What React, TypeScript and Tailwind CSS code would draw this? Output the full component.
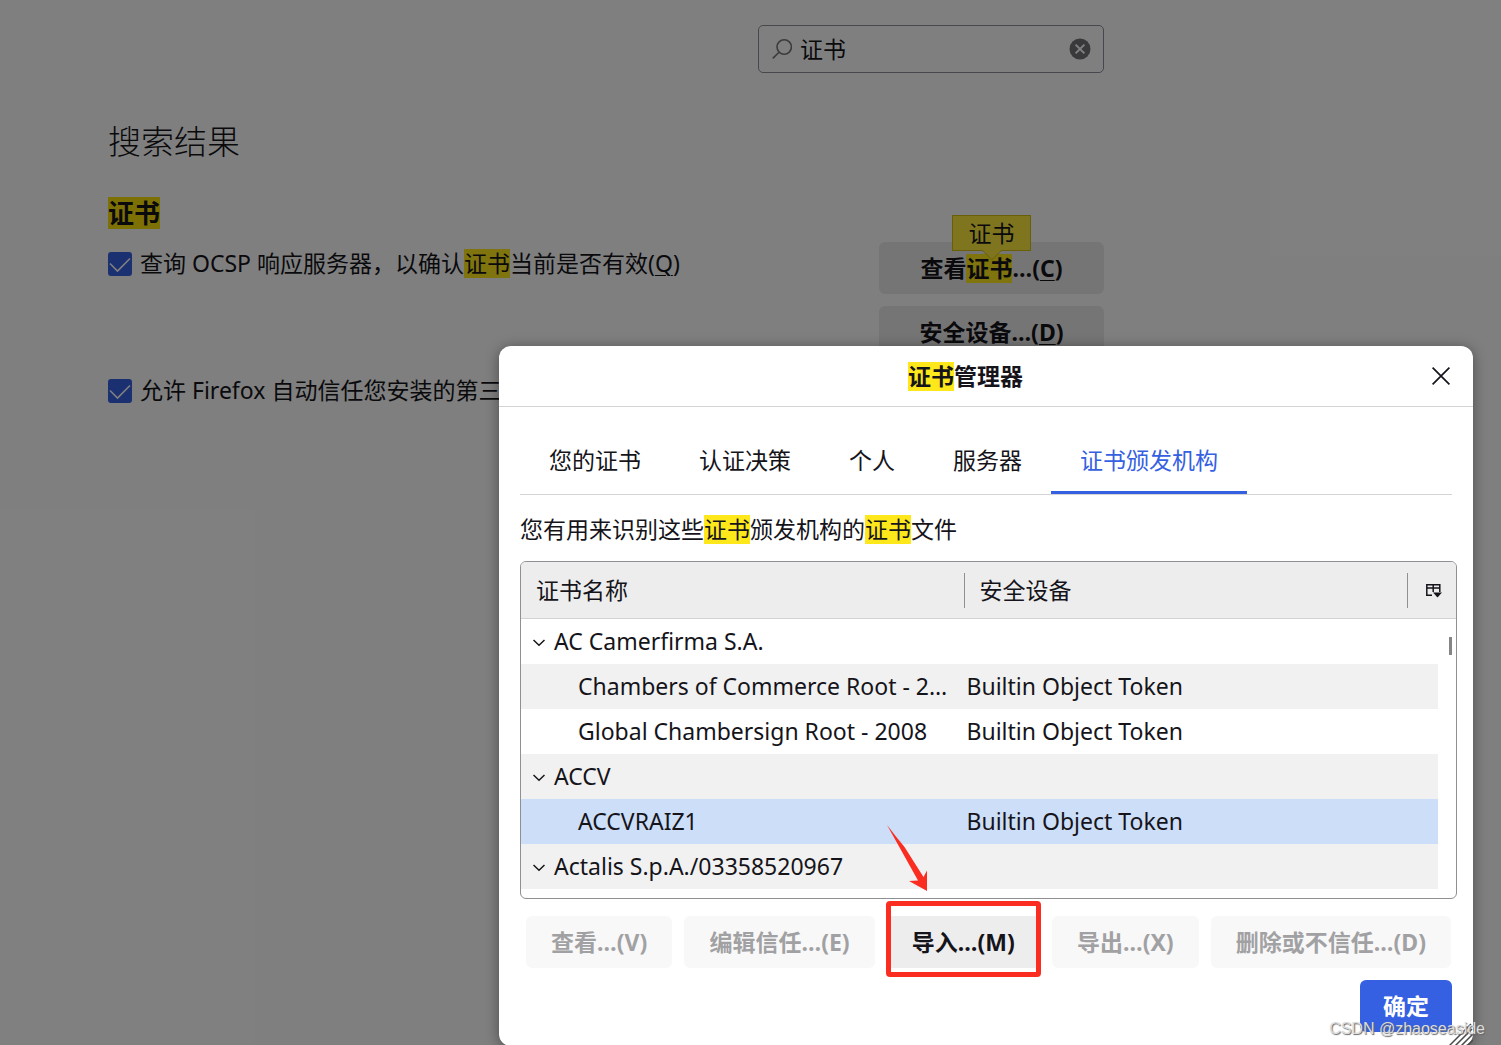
import React from "react";

type Row = {
  name: string;
  device?: string;
  selected?: boolean;
};

const rows: Row[] = [
  { name: "AC Camerfirma S.A." },
  { name: "Chambers of Commerce Root - 2…", device: "Builtin Object Token" },
  { name: "Global Chambersign Root - 2008", device: "Builtin Object Token" },
  { name: "ACCV" },
  { name: "ACCVRAIZ1", device: "Builtin Object Token", selected: true },
  { name: "Actalis S.p.A./03358520967" },
];

const tabs = ["您的证书", "认证决策", "个人", "服务器", "证书颁发机构"];

const Hit: React.FC = () => (
  <mark className="inline-block bg-[#fee81c] leading-[29px] text-inherit">证书</mark>
);

const CheckOption: React.FC<{ id: string; children: React.ReactNode }> = ({ id, children }) => (
  <div className="flex h-[29px] items-center gap-2">
    <span className="relative flex size-6 shrink-0">
      <input id={id} type="checkbox" defaultChecked className="size-6 appearance-none rounded-[3px] bg-[#3560e2]" />
      <svg className="pointer-events-none absolute inset-0" viewBox="0 0 24 24" fill="none" stroke="#fff" strokeWidth="1.6">
        <path d="M2 11.5l7.5 7.5L22 6.5" />
      </svg>
    </span>
    <label htmlFor={id} className="whitespace-nowrap leading-[29px]">
      {children}
    </label>
  </div>
);

const Key: React.FC<{ children: string }> = ({ children }) => (
  <span className="underline decoration-1 underline-offset-3">{children}</span>
);

const Settings: React.FC = () => (
  <main className="max-w-[1104px] pt-[25px] pl-[108px]">
    <div className="ml-auto flex h-12 w-[346px] items-center rounded-[5px] border border-[#8f8f9d] pr-3 pl-[13px]">
      <svg className="size-5 shrink-0" viewBox="0 0 20 20" fill="none" stroke="#77777f" strokeWidth="1.6">
        <circle cx="12.2" cy="8" r="7.2" />
        <path d="M7 13.2L.8 19.4" />
      </svg>
      <input
        type="text"
        aria-label="证书"
        defaultValue="证书"
        className="ml-2 min-w-0 flex-1 bg-transparent outline-none"
      />
      <button aria-label="×" className="shrink-0">
        <svg className="size-[22px]" viewBox="0 0 22 22">
          <circle cx="11" cy="11" r="10.5" fill="#737378" />
          <path d="M6.6 6.6l8.8 8.8M15.4 6.6l-8.8 8.8" stroke="#fff" strokeWidth="2" />
        </svg>
      </button>
    </div>

    <h1 className="mt-[45px] text-[33px] leading-[48px] font-light">搜索结果</h1>
    <h2 className="mt-[31px] flex text-[26px] font-bold">
      <mark className="bg-[#fae20a] leading-8 text-inherit">证书</mark>
    </h2>

    <div className="mt-[13px] flex items-start justify-between">
      <div className="flex flex-col gap-[98px] pt-[7px]">
        <CheckOption id="ocsp">
          查询 OCSP 响应服务器，以确认
          <Hit />
          当前是否有效(<Key>Q</Key>)
        </CheckOption>
        <CheckOption id="roots">允许 Firefox 自动信任您安装的第三方</CheckOption>
      </div>
      <div className="flex w-[225px] shrink-0 flex-col gap-3 font-bold">
        <button className="relative h-[52px] rounded-md bg-[#ebebed]">
          查看
          <Hit />
          …(<Key>C</Key>)
          <span className="absolute -top-[27px] left-[73px] flex h-9 w-[79px] items-center justify-center border border-[#d3bf10] bg-[#ffeb3e] font-normal">
            证书
            <svg className="absolute top-[34px] left-[29px] h-2.5 w-5" viewBox="0 0 20 10">
              <path d="M0 0h20L10 10z" fill="#ffeb3e" />
              <path d="M0 0L10 9.6L20 0" fill="none" stroke="#d3bf10" />
            </svg>
          </span>
        </button>
        <button className="h-[52px] rounded-md bg-[#ebebed]">
          安全设备…(<Key>D</Key>)
        </button>
      </div>
    </div>
  </main>
);

const TreeRow: React.FC<{ row: Row; striped: boolean }> = ({ row, striped }) => (
  <tr className={row.selected ? "h-[45px] bg-[#cddef8]" : striped ? "h-[45px] bg-[#f1f1f1]" : "h-[45px] bg-white"}>
    <td className="p-0">
      {row.device ? (
        <div className="truncate pl-[57px]">{row.name}</div>
      ) : (
        <div className="flex items-center gap-[9px] pl-3">
          <svg className="size-3 shrink-0" viewBox="0 0 12 12" fill="none" stroke="#15141a" strokeWidth="1.5">
            <path d="M.5 4L6 9.2L11.5 4" />
          </svg>
          {row.name}
        </div>
      )}
    </td>
    <td className="p-0 pl-0.5">{row.device}</td>
    <td className="border-r-18 border-white p-0" />
  </tr>
);

const CertTree: React.FC = () => (
  <div className="relative overflow-hidden rounded-md border border-[#8f8f94] pb-[9px]">
    <table className="w-full table-fixed border-separate border-spacing-0 text-left">
      <colgroup>
        <col />
        <col />
        <col className="w-[48px]" />
      </colgroup>
      <thead className="bg-[#ededed]">
        <tr className="h-[57px]">
          <th className="border-b border-[#d2d2d4] p-0 font-normal">
            <div className="flex h-[35px] items-center border-r border-[#8f8f94] pl-[15px]">证书名称</div>
          </th>
          <th className="border-b border-[#d2d2d4] p-0 font-normal">
            <div className="flex h-[35px] items-center border-r border-[#8f8f94] pl-[15px]">安全设备</div>
          </th>
          <th className="border-b border-[#d2d2d4] p-0">
            <button aria-label="▾" className="ml-[18px] flex">
              <svg className="h-[15px] w-4" viewBox="0 0 16 15" fill="none" stroke="#15141a" strokeWidth="1.5">
                <path d="M6 12.2H.8V1.8h13V9M.8 5h13M7.2 1.8V9" />
                <path d="M7 9.5h9L11.5 14.5z" fill="#15141a" stroke="none" />
              </svg>
            </button>
          </th>
        </tr>
      </thead>
      <tbody>
        {rows.map((row, i) => (
          <TreeRow key={row.name} row={row} striped={i % 2 === 1} />
        ))}
      </tbody>
    </table>
    <span className="absolute top-[75px] right-1 h-[18px] w-[3px] bg-[#858585]" />
  </div>
);

const action = "h-[52px] flex-auto rounded-md bg-[#f8f8f8] text-[#a1a1a3]";

const CertManager: React.FC = () => (
  <section role="dialog" className="relative rounded-xl bg-white shadow-[0_2px_14px_rgba(0,0,0,0.4)]">
    <header className="flex h-[61px] items-center border-b border-[#d4d4d6]">
      <h2 className="flex-1 text-center leading-[29px] font-bold">
        <Hit />
        管理器
      </h2>
      <button aria-label="✕" className="mr-[23px]">
        <svg className="size-[18px]" viewBox="0 0 18 18" fill="none" stroke="#15141a" strokeWidth="1.7">
          <path d="M.6.6l16.8 16.8M17.4.6L.6 17.4" />
        </svg>
      </button>
    </header>

    <div className="pt-[21px] pr-4 pb-[14px] pl-[21px]">
      <div role="tablist" className="mr-[5px] flex h-[67px] border-b border-[#d4d4d6]">
        {tabs.map((tab, i) => (
          <button
            key={tab}
            role="tab"
            aria-selected={i === 4}
            className={
              i === 4
                ? "border-b-3 border-[#3560e2] px-[29px] pt-0.5 text-[#3560e2]"
                : "border-b-3 border-transparent px-[29px] pt-0.5"
            }
          >
            {tab}
          </button>
        ))}
      </div>

      <p className="mt-5 mb-[17px] leading-[29px]">
        您有用来识别这些
        <Hit />
        颁发机构的
        <Hit />
        文件
      </p>

      <CertTree />

      <div className="mt-[17px] mr-[6px] ml-[6px] flex gap-3 font-bold">
        <button disabled className={action}>查看…(V)</button>
        <button disabled className={action}>编辑信任…(E)</button>
        <button className="relative h-[52px] flex-auto rounded-md bg-[#ededed]">
          导入…(M)
          <span className="absolute -inset-x-px -top-[15px] -bottom-[9px] rounded-sm border-5 border-[#fb2d20]" />
          <svg className="absolute -top-[91px] left-0 h-[67px] w-[42px]" viewBox="0 0 42 67" fill="#fb2d20">
            <path d="M0 0C6 8 12 15 17.5 22L36.5 52L40 45.5V66L22 56L31 55.5L14 25z" />
          </svg>
        </button>
        <button disabled className={action}>导出…(X)</button>
        <button disabled className={action}>删除或不信任…(D)</button>
      </div>

      <div className="mt-3 mr-[5px] flex justify-end">
        <button className="h-[52px] rounded-md bg-[#3560e2] px-[23px] font-bold text-white">确定</button>
      </div>
    </div>

    <svg className="absolute right-0 bottom-0 size-6" viewBox="0 0 24 24" stroke="#4a4a4a" strokeWidth="1.5">
      <path d="M0 24L22 2M6 24L23 7M12 24L23.5 12.5M18 24L24 18" />
    </svg>
  </section>
);

const App: React.FC = () => (
  <div className="relative h-screen overflow-hidden bg-white font-['Noto_Sans','Noto_Sans_CJK_SC',sans-serif] text-[23px] text-[#15141a]">
    <Settings />
    <div className="absolute inset-0 bg-black/50 pt-[346px] pr-7 pl-[499px]">
      <CertManager />
    </div>
    <span className="absolute right-4 bottom-1 font-['Liberation_Sans',sans-serif] text-base text-[#dcdcdc] [text-shadow:1px_1px_1px_#666]">
      CSDN @zhaoseaside
    </span>
  </div>
);

export default App;
